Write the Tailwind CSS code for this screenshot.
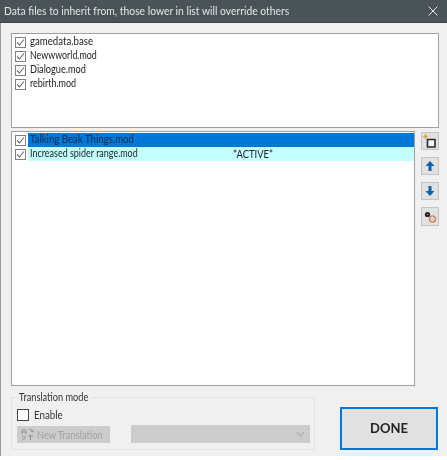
<!DOCTYPE html>
<html>
<head>
<meta charset="utf-8">
<script src="https://cdn.jsdelivr.net/npm/@tailwindcss/browser@4"></script>
</head>
<body class="m-0 bg-white">
<div class="w-[447px] h-[460px] overflow-hidden bg-white font-['Lato','Liberation_Sans',sans-serif] text-[11.5px] text-[#222] blur-[0.35px]">
  <div class="w-[447px] h-[456px] bg-[#f0f0f0] border-l border-[#9a9a9a] flex flex-col">
    <div class="h-[23px] shrink-0 -ml-px bg-[#4a5357] border-b border-[#3c4448] flex items-center justify-between pl-[4px] pr-[9px] text-[#e4e6e7] text-[12px] whitespace-nowrap">
      <span class="w-[285px] origin-left scale-x-[0.86]">Data files to inherit from, those lower in list will override others</span>
      <svg width="10" height="10" viewBox="0 0 10 10" fill="none" stroke="#e8eaea" stroke-width="1"><path d="M0.5 0.5 9.5 9.5M9.5 0.5 0.5 9.5"/></svg>
    </div>
    <div class="flex-1 pl-[10px] pr-[8px] pt-[10px] flex flex-col">
      <div class="w-[428px] h-[95px] shrink-0 bg-white border border-[#a0a0a0] pl-[3px] pt-[1px]">
        <div class="flex items-center h-[14px] gap-[4px]"><span class="w-[11px] h-[11px] border border-[#808080] bg-white flex items-center justify-center shrink-0"><svg width="9" height="9" viewBox="0 0 9 9" fill="none" stroke="#666" stroke-width="1.1"><path d="M1 4.5 3.5 7 8 1.5"/></svg></span><span class="pb-[2px] origin-left scale-x-[0.84]">gamedata.base</span></div>
        <div class="flex items-center h-[14px] gap-[4px]"><span class="w-[11px] h-[11px] border border-[#808080] bg-white flex items-center justify-center shrink-0"><svg width="9" height="9" viewBox="0 0 9 9" fill="none" stroke="#666" stroke-width="1.1"><path d="M1 4.5 3.5 7 8 1.5"/></svg></span><span class="pb-[2px] origin-left scale-x-[0.77]">Newwworld.mod</span></div>
        <div class="flex items-center h-[14px] gap-[4px]"><span class="w-[11px] h-[11px] border border-[#808080] bg-white flex items-center justify-center shrink-0"><svg width="9" height="9" viewBox="0 0 9 9" fill="none" stroke="#666" stroke-width="1.1"><path d="M1 4.5 3.5 7 8 1.5"/></svg></span><span class="pb-[2px] origin-left scale-x-[0.8]">Dialogue.mod</span></div>
        <div class="flex items-center h-[14px] gap-[4px]"><span class="w-[11px] h-[11px] border border-[#808080] bg-white flex items-center justify-center shrink-0"><svg width="9" height="9" viewBox="0 0 9 9" fill="none" stroke="#666" stroke-width="1.1"><path d="M1 4.5 3.5 7 8 1.5"/></svg></span><span class="pb-[2px] origin-left scale-x-[0.78]">rebirth.mod</span></div>
      </div>
      <div class="flex mt-[3px] gap-[6px]">
        <div class="w-[404px] h-[255px] shrink-0 bg-white border border-[#a0a0a0] pl-[3px] pt-[1px]">
          <div class="flex items-center h-[14px] gap-[2px]"><span class="w-[11px] h-[11px] border border-[#808080] bg-white flex items-center justify-center shrink-0"><svg width="9" height="9" viewBox="0 0 9 9" fill="none" stroke="#666" stroke-width="1.1"><path d="M1 4.5 3.5 7 8 1.5"/></svg></span><span class="flex-1 h-[14px] leading-[12px] bg-[#0078d7] pl-[2px] text-[#0b2c4a]"><span class="inline-block origin-left scale-x-[0.84]">Talking Beak Things.mod</span></span></div>
          <div class="flex items-center h-[14px] gap-[2px]"><span class="w-[11px] h-[11px] border border-[#808080] bg-white flex items-center justify-center shrink-0"><svg width="9" height="9" viewBox="0 0 9 9" fill="none" stroke="#666" stroke-width="1.1"><path d="M1 4.5 3.5 7 8 1.5"/></svg></span><span class="flex-1 h-[14px] leading-[11px] bg-[#c4ffff] pl-[2px] flex"><span class="w-[203px] origin-left scale-x-[0.78]">Increased spider range.mod</span><span class="leading-[13px] origin-left scale-x-[0.82]">*ACTIVE*</span></span></div>
        </div>
        <div class="flex flex-col pt-[1px] gap-[7px]">
          <button class="w-[18px] h-[18px] bg-[#e1e1e1] border border-[#c4c4c4] flex items-center justify-center">
            <svg width="16" height="16" viewBox="0 0 16 16"><path d="M3.5 0.5 4.4 2.6 6.5 3.5 4.4 4.4 3.5 6.5 2.6 4.4 0.5 3.5 2.6 2.6Z" fill="#e0a040"/><path d="M5.5 6.5H13V14H5.5Z" fill="#f4f4f4" stroke="#2a2a2a" stroke-width="1.6"/></svg>
          </button>
          <button class="w-[18px] h-[18px] bg-[#e1e1e1] border border-[#c4c4c4] flex items-center justify-center">
            <svg width="12" height="12" viewBox="0 0 12 12" fill="#0f62a8"><path d="M6 1 10.5 6H7.5V11H4.5V6H1.5Z"/></svg>
          </button>
          <button class="w-[18px] h-[18px] bg-[#e1e1e1] border border-[#c4c4c4] flex items-center justify-center">
            <svg width="12" height="12" viewBox="0 0 12 12" fill="#0f62a8"><path d="M6 11 10.5 6H7.5V1H4.5V6H1.5Z"/></svg>
          </button>
          <button class="w-[18px] h-[19px] bg-[#e1e1e1] border border-[#c4c4c4] flex items-center justify-center">
            <svg width="14" height="14" viewBox="0 0 14 14"><circle cx="4.5" cy="4.5" r="2.6" fill="#1d1a18"/><circle cx="4.5" cy="4.5" r="0.8" fill="#9a9a9a"/><circle cx="9.5" cy="9" r="3" fill="none" stroke="#c98a68" stroke-width="1.6"/><circle cx="9.5" cy="9" r="1" fill="#e0b8a0"/></svg>
          </button>
        </div>
      </div>
      <div class="flex mt-[11px] items-end">
        <div class="w-[304px] h-[53px] border border-[#e2e2e2] pl-[5px] relative">
          <span class="absolute left-[5px] -top-[8px] w-[74px] px-[2px] bg-[#f0f0f0] leading-[13px] text-[#333] whitespace-nowrap"><span class="inline-block origin-left scale-x-[0.8]">Translation mode</span></span>
          <label class="flex items-center gap-[5px] h-[14px] mt-[10px]"><span class="w-[12px] h-[12px] border border-[#444] bg-white"></span><span class="text-[#333] origin-left scale-x-[0.85]">Enable</span></label>
          <div class="flex mt-[4px] gap-[21px]">
            <button class="w-[93px] h-[17px] bg-[#cccccc] flex items-center pl-[4px] gap-[3px] text-[#a2a2a2]">
              <svg class="shrink-0" width="13" height="13" viewBox="0 0 13 13" fill="none" stroke="#909090"><path d="M1 6V3L3 1 5 3V6M1 4H5M8 1.5C10 1 11.5 2 11.5 4M11.5 4 10 3M11.5 4 12.5 2.5M1.5 9C1.5 8 4.5 8 4.5 9.5S1.5 12 1.5 10.5M7 8H12M9.5 7V12"/></svg>
              <span class="w-[66px] whitespace-nowrap text-left origin-left scale-x-[0.81]">New Translation</span>
            </button>
            <div class="w-[179px] h-[18px] -mt-px bg-[#cccccc] flex items-center justify-end pr-[5px]">
              <svg width="9" height="6" viewBox="0 0 9 6" fill="none" stroke="#a8a8a8" stroke-width="1.1"><path d="M1 1 4.5 5 8 1"/></svg>
            </div>
          </div>
        </div>
        <button class="ml-[25px] w-[98px] h-[43px] mb-[0px] bg-[#e1e1e1] border-2 border-[#0078d7] font-bold text-[13px] text-[#222]">DONE</button>
      </div>
    </div>
  </div>
</div>
</body>
</html>
